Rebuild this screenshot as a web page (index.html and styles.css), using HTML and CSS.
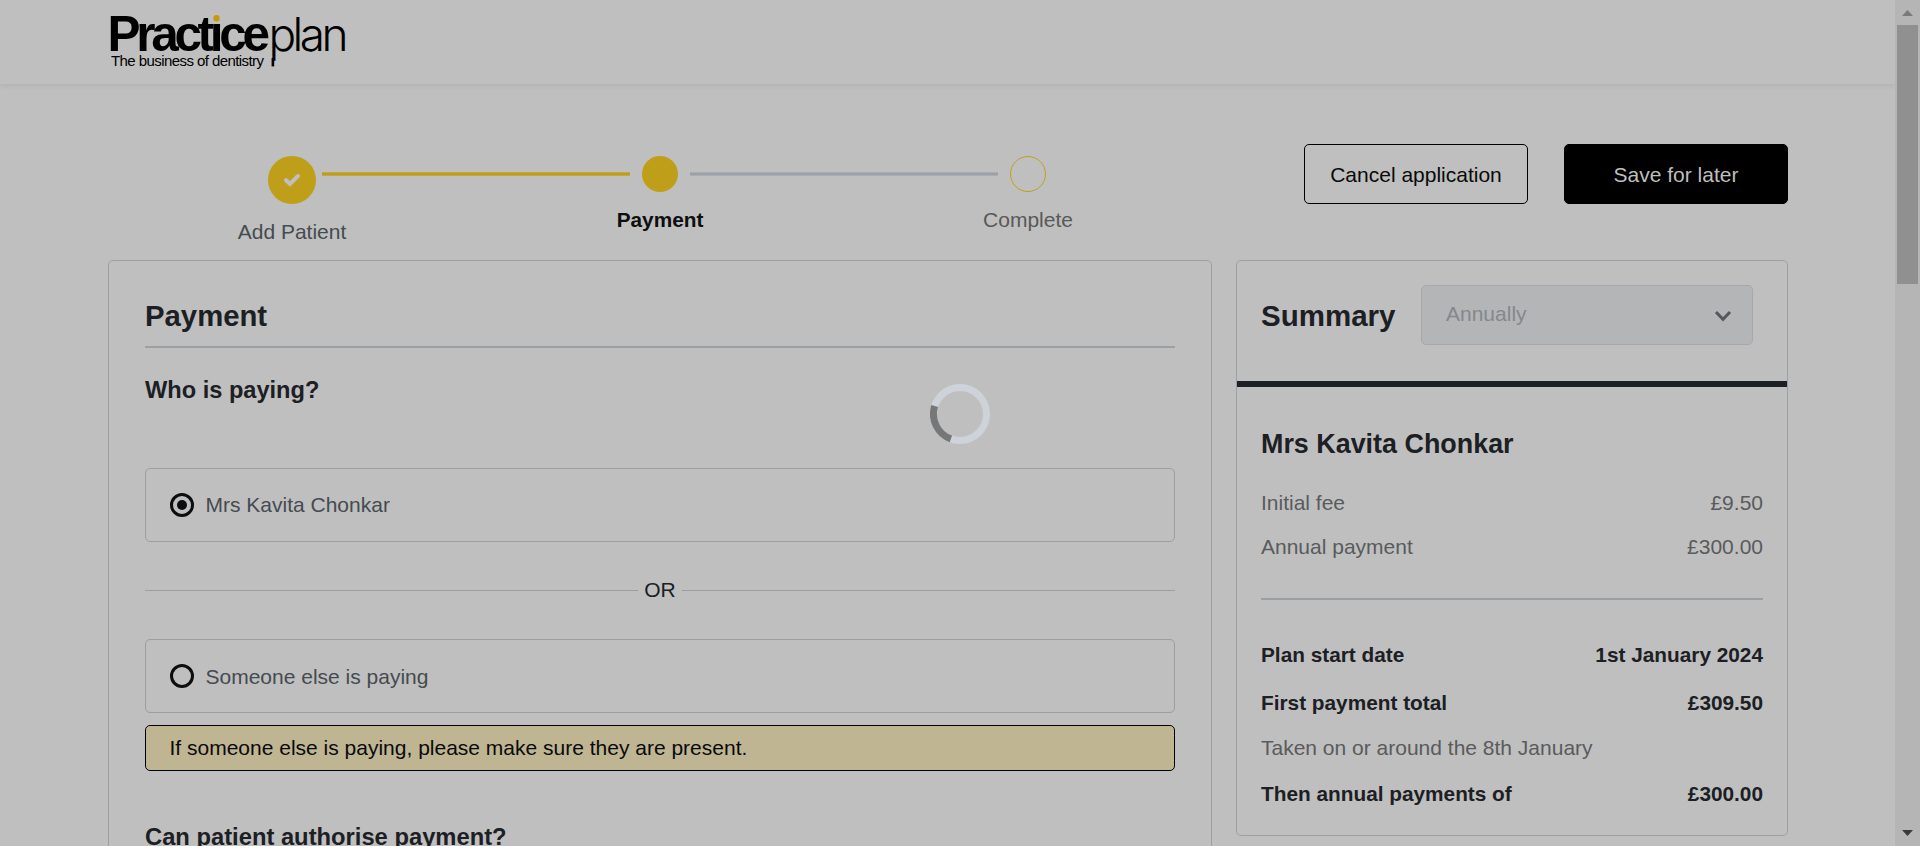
FILE: index.html
```html
<!DOCTYPE html>
<html lang="en">
<head>
<meta charset="utf-8">
<title>Practice Plan - Payment</title>
<link rel="stylesheet" href="styles.css">
</head>
<body>
<div class="page">
  <header class="header">
    <svg class="logo" width="240" height="72" viewBox="0 0 240 72" role="img" aria-label="Practiceplan">
      <text class="logo-bold" x="-.5" y="51" textLength="162.5" lengthAdjust="spacing">Practıce</text>
      <circle class="logo-dot" cx="108.5" cy="18.3" r="3.2"/>
      <text class="logo-light" x="160.5" y="51" textLength="80" lengthAdjust="spacing">plan</text>
      <path class="logo-stem" d="M164.9 58V66.4"/>
      <text class="logo-tag" x="3" y="65.5" textLength="153" lengthAdjust="spacing">The business of dentistry</text>
    </svg>
  </header>

  <div class="topbar">
    <ol class="stepper">
      <li class="step done">
        <div class="track">
          <span class="line none"></span>
          <span class="node"><svg width="18" height="14" viewBox="0 0 18 14"><path d="M3 7.2 7 11 15 3" fill="none" stroke="#bfbfbf" stroke-width="4" stroke-linecap="round" stroke-linejoin="miter"/></svg></span>
          <span class="line gold"></span>
        </div>
        <span class="label">Add Patient</span>
      </li>
      <li class="step current">
        <div class="track">
          <span class="line gold"></span>
          <span class="node"></span>
          <span class="line"></span>
        </div>
        <span class="label">Payment</span>
      </li>
      <li class="step todo">
        <div class="track">
          <span class="line"></span>
          <span class="node"></span>
          <span class="line none"></span>
        </div>
        <span class="label">Complete</span>
      </li>
    </ol>
    <div class="actions">
      <button class="btn">Cancel application</button>
      <button class="btn primary">Save for later</button>
    </div>
  </div>

  <main class="columns">
    <section class="panel payment">
      <h1 class="title">Payment</h1>
      <h2 class="question">Who is paying?</h2>
      <label class="choice"><span class="radio checked"></span><span>Mrs Kavita Chonkar</span></label>
      <div class="or">OR</div>
      <label class="choice other"><span class="radio"></span><span>Someone else is paying</span></label>
      <p class="note">If someone else is paying, please make sure they are present.</p>
      <h2 class="question second">Can patient authorise payment?</h2>
    </section>

    <aside class="panel summary">
      <div class="summary-head">
        <h1 class="summary-title">Summary</h1>
        <div class="select"><span>Annually</span>
          <svg width="18" height="12" viewBox="0 0 18 12"><path d="M2 2 9 9.3 16 2" fill="none" stroke="#55585b" stroke-width="3"/></svg>
        </div>
      </div>
      <div class="summary-body">
        <h2 class="name">Mrs Kavita Chonkar</h2>
        <div class="row fee"><span>Initial fee</span><span>£9.50</span></div>
        <div class="row annual"><span>Annual payment</span><span>£300.00</span></div>
        <div class="row strong start"><span>Plan start date</span><span>1st January 2024</span></div>
        <div class="row strong first"><span>First payment total</span><span>£309.50</span></div>
        <div class="row taken"><span>Taken on or around the 8th January</span></div>
        <div class="row strong then"><span>Then annual payments of</span><span>£300.00</span></div>
      </div>
    </aside>
  </main>
</div>

<div class="scrollbar">
  <svg class="arrow" width="11" height="6" viewBox="0 0 11 6"><path d="M5.5 0 11 6H0z" fill="#7a7a7a"/></svg>
  <span class="thumb"></span>
  <svg class="arrow" width="11" height="6" viewBox="0 0 11 6"><path d="M0 0H11L5.5 6z" fill="#3a3a3a"/></svg>
</div>

<svg class="spinner" width="60" height="60" viewBox="0 0 60 60">
  <circle cx="30" cy="30" r="26.5" fill="none" stroke="#ced3da" stroke-width="7"/>
  <path d="M20.9 54.9A26.5 26.5 0 0 1 4.7 22" fill="none" stroke="#757779" stroke-width="7"/>
</svg>
</body>
</html>
```

FILE: styles.css
```css
* { box-sizing: border-box; margin: 0; padding: 0; }

body {
  display: flex;
  height: 846px;
  overflow: hidden;
  background: #bfbfbf;
  color: #1c2024;
  font: 21px/24px "Liberation Sans", Arial, sans-serif;
}

.page { width: 1895px; height: 846px; overflow: hidden; }

.header {
  height: 84px;
  padding-left: 108px;
  box-shadow: 0 2px 5px rgba(0, 0, 0, .07);
}
.logo { display: block; overflow: visible; }
.logo-bold { font: bold 49.5px "Liberation Sans", sans-serif; }
.logo-light { font: 300 46px Inter, Roboto, sans-serif; }
.logo-tag { font: 15px "Liberation Sans", sans-serif; }
.logo-dot { fill: #c79b06; }
.logo-stem { fill: none; stroke: #000; stroke-width: 2.6; }

.topbar { display: flex; height: 176px; padding-left: 108px; }
.stepper { display: flex; width: 1104px; padding-top: 72px; list-style: none; }
.step { width: 368px; text-align: center; }
.track { display: flex; gap: 12px; margin-bottom: 16px; }
.done .track { gap: 6px; }
.line {
  flex: 1;
  height: 4px;
  margin-top: 16px;
  background: #9ba1a7;
  border: solid #aaaeb2;
  border-width: 1px 0;
}
.line.gold { background: #bf9f1a; border-color: #bfa845; }
.line.none { visibility: hidden; }
.node {
  display: flex;
  align-items: center;
  justify-content: center;
  width: 36px;
  height: 36px;
  border-radius: 50%;
  background: #bf9f1a;
}
.done .node { width: 48px; height: 48px; }
.todo .node { background: none; border: 1px solid #bf9f1a; }
.label { display: block; }
.done .label { color: #454b50; }
.current .label { font-weight: bold; font-size: 20.8px; color: #0d0e0f; }
.todo .label { color: #595959; }

.actions { display: flex; gap: 36px; padding: 60px 0 0 92px; }
.btn {
  width: 224px;
  height: 60px;
  padding-top: 2px;
  border: 1px solid #000;
  border-radius: 5px;
  background: none;
  color: #0a0a0a;
  font: inherit;
}
.btn.primary { background: #000; color: #bfbfbf; }

.columns { display: flex; gap: 24px; padding-left: 108px; align-items: flex-start; }
.panel { border: 1px solid #9b9fa2; border-radius: 5px; }
.payment { width: 1104px; height: 720px; padding: 36px 36px 0; }
.title {
  height: 51px;
  border-bottom: 2px solid #9ba0a5;
  font-size: 29.3px;
  line-height: 37px;
}
.question { margin-top: 28px; font-size: 23.6px; line-height: 28px; }
.choice {
  display: flex;
  align-items: center;
  gap: 11.5px;
  height: 74px;
  padding-left: 24px;
  border: 1px solid #9b9fa2;
  border-radius: 5px;
  color: #454b50;
}
.other > span:last-child { padding-top: 2px; }
.question + .choice { margin-top: 64px; }
.radio {
  display: flex;
  align-items: center;
  justify-content: center;
  width: 24px;
  height: 24px;
  border: 3px solid #0c0d0e;
  border-radius: 50%;
}
.radio.checked::after {
  content: "";
  width: 10px;
  height: 10px;
  border-radius: 50%;
  background: #0c0d0e;
}
.or { display: flex; align-items: center; gap: 6px; height: 24px; margin: 36px 0 37px; }
.or::before, .or::after { content: ""; flex: 1; height: 1px; background: #9b9fa2; }
.note {
  height: 46px;
  margin-top: 12px;
  padding-left: 23.5px;
  border: 1px solid #000;
  border-radius: 5px;
  background: #bfb592;
  color: #0a0a0a;
  line-height: 44px;
}
.question.second { margin-top: 52px; font-size: 23.75px; }

.summary { width: 552px; height: 576px; }
.summary-head {
  display: flex;
  height: 126px;
  padding: 24px 0 0 24px;
  border-bottom: 6px solid #1d2126;
}
.summary-title { width: 160px; font-size: 29.5px; line-height: 61px; }
.select {
  display: flex;
  align-items: center;
  justify-content: space-between;
  width: 332px;
  height: 60px;
  padding: 0 20px 0 24px;
  border: 1px solid #a5a9ad;
  border-radius: 5px;
  background: #b3b5b7;
  color: #84888c;
}
.select span { margin-top: -2px; }
.select svg { margin-top: 2px; }
.summary-body { padding: 40px 24px 0; }
.name { font-size: 26.9px; line-height: 34px; }
.row { display: flex; justify-content: space-between; color: #595b5d; }
.row.strong { font-weight: bold; font-size: 20.8px; color: #1c2024; }
.fee { margin-top: 30px; }
.annual { margin-top: 20px; padding-bottom: 39px; border-bottom: 2px solid #9ba0a5; }
.start { margin-top: 43px; }
.first { margin-top: 24px; }
.taken { margin-top: 21px; }
.then { margin-top: 22px; }

.scrollbar {
  display: flex;
  flex-direction: column;
  align-items: center;
  width: 25px;
  height: 846px;
  padding: 10px 0;
  background: #b5b5b5;
}
.thumb { width: 21px; height: 259px; margin: 9px 0 auto; background: #909090; }

.spinner { position: absolute; left: 930px; top: 384px; }
```
